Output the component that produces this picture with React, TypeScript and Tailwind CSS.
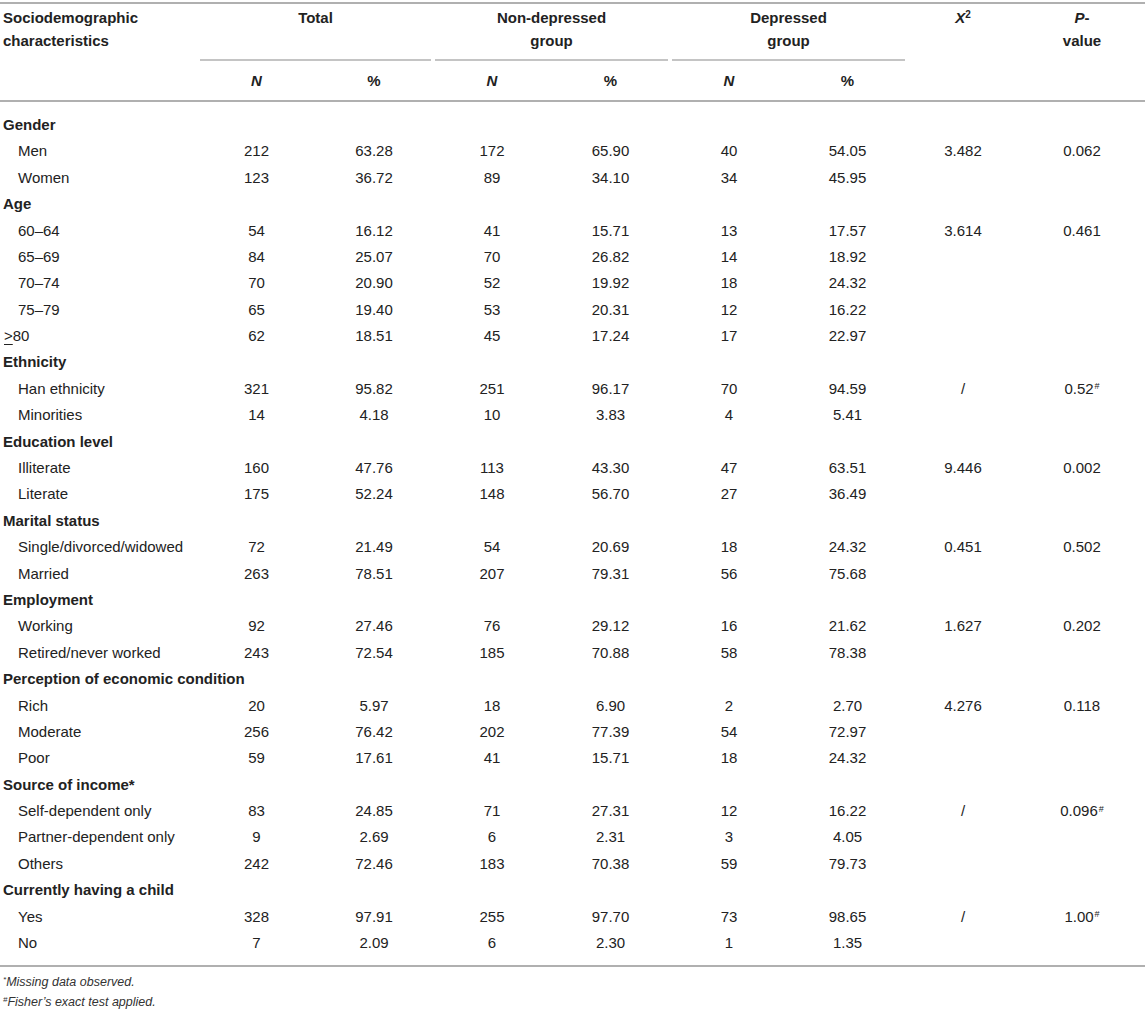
import React from "react";

type Row = {
  label: React.ReactNode;
  cells: string[];
  x2?: string;
  p?: React.ReactNode;
  flush?: boolean;
};

type Group = { title: string; rows: Row[] };

const Hash = () => <sup className="text-[9px] ml-[1px]">#</sup>;

const groups: Group[] = [
  {
    title: "Gender",
    rows: [
      { label: "Men", cells: ["212", "63.28", "172", "65.90", "40", "54.05"], x2: "3.482", p: "0.062" },
      { label: "Women", cells: ["123", "36.72", "89", "34.10", "34", "45.95"] },
    ],
  },
  {
    title: "Age",
    rows: [
      { label: "60–64", cells: ["54", "16.12", "41", "15.71", "13", "17.57"], x2: "3.614", p: "0.461" },
      { label: "65–69", cells: ["84", "25.07", "70", "26.82", "14", "18.92"] },
      { label: "70–74", cells: ["70", "20.90", "52", "19.92", "18", "24.32"] },
      { label: "75–79", cells: ["65", "19.40", "53", "20.31", "12", "16.22"] },
      {
        label: (
          <>
            <span className="underline underline-offset-[3px]">&gt;</span>80
          </>
        ),
        cells: ["62", "18.51", "45", "17.24", "17", "22.97"],
        flush: true,
      },
    ],
  },
  {
    title: "Ethnicity",
    rows: [
      { label: "Han ethnicity", cells: ["321", "95.82", "251", "96.17", "70", "94.59"], x2: "/", p: <>0.52<Hash /></> },
      { label: "Minorities", cells: ["14", "4.18", "10", "3.83", "4", "5.41"] },
    ],
  },
  {
    title: "Education level",
    rows: [
      { label: "Illiterate", cells: ["160", "47.76", "113", "43.30", "47", "63.51"], x2: "9.446", p: "0.002" },
      { label: "Literate", cells: ["175", "52.24", "148", "56.70", "27", "36.49"] },
    ],
  },
  {
    title: "Marital status",
    rows: [
      { label: "Single/divorced/widowed", cells: ["72", "21.49", "54", "20.69", "18", "24.32"], x2: "0.451", p: "0.502" },
      { label: "Married", cells: ["263", "78.51", "207", "79.31", "56", "75.68"] },
    ],
  },
  {
    title: "Employment",
    rows: [
      { label: "Working", cells: ["92", "27.46", "76", "29.12", "16", "21.62"], x2: "1.627", p: "0.202" },
      { label: "Retired/never worked", cells: ["243", "72.54", "185", "70.88", "58", "78.38"] },
    ],
  },
  {
    title: "Perception of economic condition",
    rows: [
      { label: "Rich", cells: ["20", "5.97", "18", "6.90", "2", "2.70"], x2: "4.276", p: "0.118" },
      { label: "Moderate", cells: ["256", "76.42", "202", "77.39", "54", "72.97"] },
      { label: "Poor", cells: ["59", "17.61", "41", "15.71", "18", "24.32"] },
    ],
  },
  {
    title: "Source of income*",
    rows: [
      { label: "Self-dependent only", cells: ["83", "24.85", "71", "27.31", "12", "16.22"], x2: "/", p: <>0.096<Hash /></> },
      { label: "Partner-dependent only", cells: ["9", "2.69", "6", "2.31", "3", "4.05"] },
      { label: "Others", cells: ["242", "72.46", "183", "70.38", "59", "79.73"] },
    ],
  },
  {
    title: "Currently having a child",
    rows: [
      { label: "Yes", cells: ["328", "97.91", "255", "97.70", "73", "98.65"], x2: "/", p: <>1.00<Hash /></> },
      { label: "No", cells: ["7", "2.09", "6", "2.30", "1", "1.35"] },
    ],
  },
];

const cols = "grid grid-cols-[198px_117px_118px_118px_119px_118px_119px_112px_126px]";

const App: React.FC = () => {
  return (
    <div className="w-[1145px] bg-white text-[#222] text-[15px] font-['Liberation_Sans',Arial,sans-serif]">
      <div className="h-[2px] mt-[2px] bg-[#b0b0b0]" />

      {/* Header */}
      <div className={`${cols} grid-rows-[57px_39px] font-bold leading-[23px]`}>
        <div className="row-span-2 pl-[3px] pt-[2px]">
          Sociodemographic
          <br />
          characteristics
        </div>
        <div className="col-span-2 flex flex-col items-center pt-[2px]">
          <span>Total</span>
          <div className="mt-auto h-[2px] w-[calc(100%-4px)] bg-[#c4c4c4]" />
        </div>
        <div className="col-span-2 flex flex-col items-center pt-[2px] text-center">
          <span>
            Non-depressed
            <br />
            group
          </span>
          <div className="mt-auto h-[2px] w-[calc(100%-4px)] bg-[#c4c4c4]" />
        </div>
        <div className="col-span-2 flex flex-col items-center pt-[2px] text-center">
          <span>
            Depressed
            <br />
            group
          </span>
          <div className="mt-auto h-[2px] w-[calc(100%-4px)] bg-[#c4c4c4]" />
        </div>
        <div className="row-span-2 text-center pt-[2px]">
          <i>X</i>
          <sup className="text-[10px]">2</sup>
        </div>
        <div className="row-span-2 text-center pt-[2px]">
          <i>P</i>-
          <br />
          value
        </div>
        <div className="flex items-center justify-center"><i>N</i></div>
        <div className="flex items-center justify-center">%</div>
        <div className="flex items-center justify-center"><i>N</i></div>
        <div className="flex items-center justify-center">%</div>
        <div className="flex items-center justify-center"><i>N</i></div>
        <div className="flex items-center justify-center">%</div>
      </div>

      <div className="h-[2px] bg-[#b0b0b0]" />

      {/* Body */}
      <div className="pt-[10px] pb-[8px]">
        {groups.map((g) => (
          <div key={g.title}>
            <div className={`${cols} h-[26.4px] items-center`}>
              <div className="col-span-9 pl-[3px] font-bold">{g.title}</div>
            </div>
            {g.rows.map((r, i) => (
              <div key={i} className={`${cols} h-[26.4px] items-center`}>
                <div className={r.flush ? "pl-[4px]" : "pl-[18px]"}>{r.label}</div>
                {r.cells.map((c, j) => (
                  <div key={j} className="text-center">{c}</div>
                ))}
                <div className="text-center">{r.x2}</div>
                <div className="text-center">{r.p}</div>
              </div>
            ))}
          </div>
        ))}
      </div>

      <div className="h-[2px] bg-[#b0b0b0]" />

      {/* Footnotes */}
      <div className="pt-[5px] pl-[3px] italic text-[12.5px] leading-[20px] text-[#333]">
        <p><sup className="text-[8px]">*</sup>Missing data observed.</p>
        <p><sup className="text-[8px]">#</sup>Fisher’s exact test applied.</p>
      </div>
    </div>
  );
};

export default App;
